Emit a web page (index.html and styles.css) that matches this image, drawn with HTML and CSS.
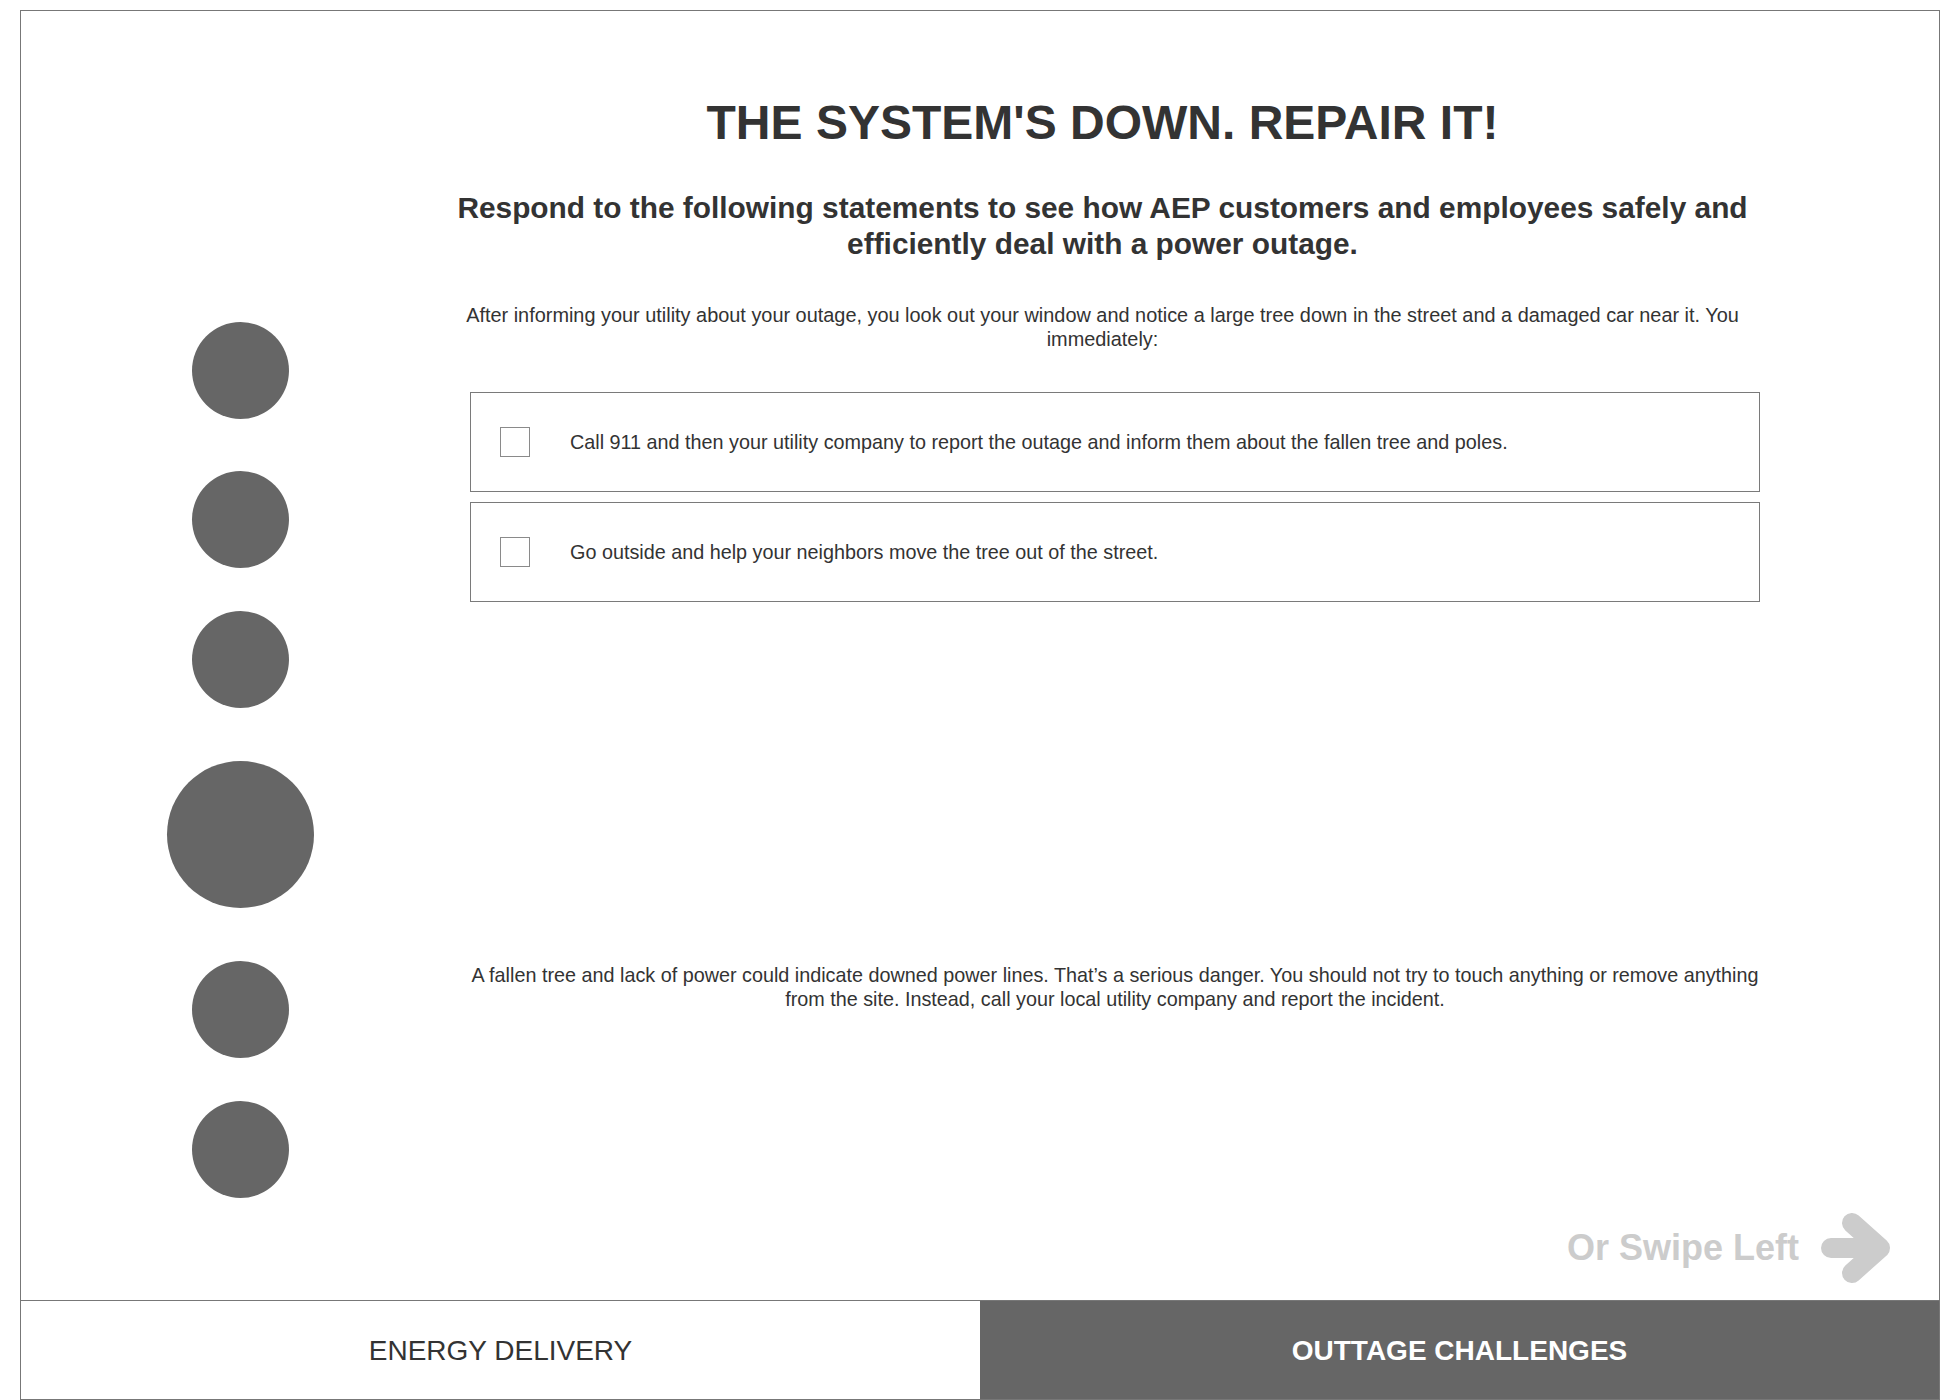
FILE: index.html
```html
<!DOCTYPE html>
<html lang="en">
<head>
<meta charset="utf-8">
<title>The System's Down. Repair It!</title>
<link rel="stylesheet" href="styles.css">
</head>
<body>
<div class="frame">
  <div class="main">
    <div class="top">
      <nav class="sidebar">
        <span class="dot"></span>
        <span class="dot"></span>
        <span class="dot"></span>
        <span class="dot dot-big"></span>
        <span class="dot"></span>
        <span class="dot"></span>
      </nav>
      <section class="content">
        <header class="intro">
          <h1 class="title">THE SYSTEM'S DOWN. REPAIR IT!</h1>
          <h2 class="subtitle">Respond to the following statements to see how AEP customers and employees safely and efficiently deal with a power outage.</h2>
          <p class="question">After informing your utility about your outage, you look out your window and notice a large tree down in the street and a damaged car near it. You immediately:</p>
        </header>
        <div class="options">
          <div class="option"><span class="check"></span><span class="option-text">Call 911 and then your utility company to report the outage and inform them about the fallen tree and poles.</span></div>
          <div class="option"><span class="check"></span><span class="option-text">Go outside and help your neighbors move the tree out of the street.</span></div>
        </div>
        <p class="feedback">A fallen tree and lack of power could indicate downed power lines. That’s a serious danger. You should not try to touch anything or remove anything from the site. Instead, call your local utility company and report the incident.</p>
      </section>
    </div>
    <div class="swipe">
      <span class="swipe-text">Or Swipe Left</span>
      <svg class="swipe-arrow" width="74" height="74" viewBox="0 0 74 74" aria-hidden="true">
        <path d="M12 37 H58 M33 12 L61 37 L33 62" fill="none" stroke="#cccccc" stroke-width="20" stroke-linecap="round" stroke-linejoin="round"/>
      </svg>
    </div>
  </div>
  <footer class="tabs">
    <div class="tab">ENERGY DELIVERY</div>
    <div class="tab tab-active">OUTTAGE CHALLENGES</div>
  </footer>
</div>
</body>
</html>
```

FILE: styles.css
```css
html, body {
  margin: 0;
  padding: 0;
  background: #ffffff;
}

body {
  font-family: "Liberation Sans", Arial, Helvetica, sans-serif;
  color: #333333;
}

.frame {
  box-sizing: border-box;
  width: 1920px;
  height: 1390px;
  margin: 10px 0 0 20px;
  border: 1px solid #777777;
  display: flex;
  flex-direction: column;
}

.main {
  flex: 1;
  display: flex;
  flex-direction: column;
}

.top {
  display: flex;
}

.sidebar {
  box-sizing: border-box;
  width: 419px;
  padding: 311px 0 0 19px;
  display: flex;
  flex-direction: column;
  align-items: center;
  flex: none;
}

.dot {
  display: block;
  width: 97px;
  height: 97px;
  border-radius: 50%;
  background: #666666;
  flex: none;
}

.dot-big {
  width: 147px;
  height: 147px;
}

.dot:nth-child(2) { margin-top: 52px; }
.dot:nth-child(3) { margin-top: 43px; }
.dot:nth-child(4) { margin-top: 53px; }
.dot:nth-child(5) { margin-top: 53px; }
.dot:nth-child(6) { margin-top: 43px; }

.content {
  width: 1325px;
  padding-top: 84px;
  flex: none;
}

.title {
  margin: 0;
  font-size: 48px;
  line-height: 56px;
  font-weight: bold;
  text-align: center;
}

.subtitle {
  margin: 39px 0 0;
  font-size: 29.85px;
  line-height: 36px;
  font-weight: bold;
  text-align: center;
}

.question {
  margin: 41px 0 0;
  font-size: 19.9px;
  line-height: 24px;
  text-align: center;
}

.options {
  margin: 41px 0 0 30px;
  width: 1290px;
  display: flex;
  flex-direction: column;
  gap: 10px;
}

.option {
  box-sizing: border-box;
  height: 100px;
  border: 1px solid #7a7a7a;
  display: flex;
  align-items: center;
  padding-left: 29px;
}

.check {
  box-sizing: border-box;
  width: 30px;
  height: 30px;
  border: 1px solid #8a8a8a;
  background: #ffffff;
  margin-right: 40px;
  flex: none;
}

.option-text {
  font-size: 19.8px;
  line-height: 24px;
}

.feedback {
  margin: 361px 0 0 25px;
  width: 1300px;
  font-size: 19.8px;
  line-height: 24px;
  text-align: center;
}

.swipe {
  display: flex;
  justify-content: flex-end;
  align-items: center;
  gap: 20px;
  padding-right: 46px;
  margin-top: 13px;
}

.swipe-text {
  font-size: 36px;
  font-weight: bold;
  color: #cccccc;
}

.swipe-arrow {
  display: block;
  flex: none;
}

.tabs {
  box-sizing: border-box;
  height: 99px;
  border-top: 1px solid #777777;
  display: flex;
  flex: none;
}

.tab {
  flex: 1;
  display: flex;
  align-items: center;
  justify-content: center;
  padding-top: 2px;
  font-size: 28px;
  color: #333333;
}

.tab-active {
  background: #666666;
  color: #ffffff;
  font-weight: bold;
}
```
